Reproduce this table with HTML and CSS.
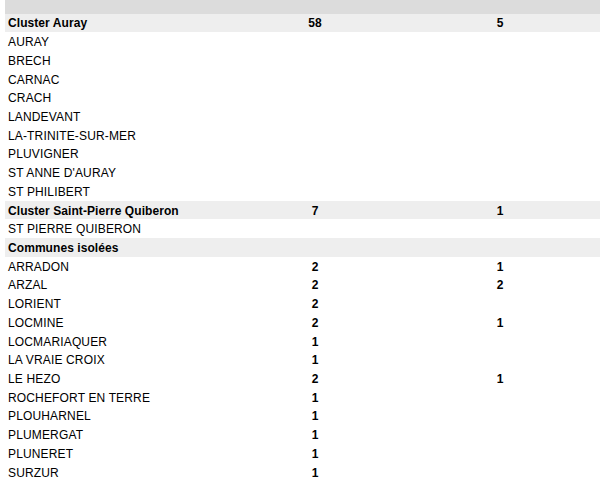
FILE: index.html
```html
<!DOCTYPE html>
<html lang="fr">
<head>
<meta charset="utf-8">
<title>Clusters</title>
<link rel="stylesheet" href="styles.css">
</head>
<body>
<table class="grid">
  <colgroup><col class="c1"><col class="c2"><col class="c3"></colgroup>
  <tr class="head"><td></td><td></td><td></td></tr>
  <tr class="group"><td>Cluster Auray</td><td class="num">58</td><td class="num">5</td></tr>
  <tr><td>AURAY</td><td class="num"></td><td class="num"></td></tr>
  <tr><td>BRECH</td><td class="num"></td><td class="num"></td></tr>
  <tr><td>CARNAC</td><td class="num"></td><td class="num"></td></tr>
  <tr><td>CRACH</td><td class="num"></td><td class="num"></td></tr>
  <tr><td>LANDEVANT</td><td class="num"></td><td class="num"></td></tr>
  <tr><td>LA-TRINITE-SUR-MER</td><td class="num"></td><td class="num"></td></tr>
  <tr><td>PLUVIGNER</td><td class="num"></td><td class="num"></td></tr>
  <tr><td>ST ANNE D'AURAY</td><td class="num"></td><td class="num"></td></tr>
  <tr><td>ST PHILIBERT</td><td class="num"></td><td class="num"></td></tr>
  <tr class="group"><td>Cluster Saint-Pierre Quiberon</td><td class="num">7</td><td class="num">1</td></tr>
  <tr><td>ST PIERRE QUIBERON</td><td class="num"></td><td class="num"></td></tr>
  <tr class="group"><td>Communes isolées</td><td class="num"></td><td class="num"></td></tr>
  <tr><td>ARRADON</td><td class="num">2</td><td class="num">1</td></tr>
  <tr><td>ARZAL</td><td class="num">2</td><td class="num">2</td></tr>
  <tr><td>LORIENT</td><td class="num">2</td><td class="num"></td></tr>
  <tr><td>LOCMINE</td><td class="num">2</td><td class="num">1</td></tr>
  <tr><td>LOCMARIAQUER</td><td class="num">1</td><td class="num"></td></tr>
  <tr><td>LA VRAIE CROIX</td><td class="num">1</td><td class="num"></td></tr>
  <tr><td>LE HEZO</td><td class="num">2</td><td class="num">1</td></tr>
  <tr><td>ROCHEFORT EN TERRE</td><td class="num">1</td><td class="num"></td></tr>
  <tr><td>PLOUHARNEL</td><td class="num">1</td><td class="num"></td></tr>
  <tr><td>PLUMERGAT</td><td class="num">1</td><td class="num"></td></tr>
  <tr><td>PLUNERET</td><td class="num">1</td><td class="num"></td></tr>
  <tr><td>SURZUR</td><td class="num">1</td><td class="num"></td></tr>
</table>
</body>
</html>
```
FILE: styles.css
```css
html, body {
  margin: 0;
  padding: 0;
  background: #ffffff;
}
body {
  padding-left: 5px;
  font-family: "Liberation Sans", Arial, sans-serif;
  font-size: 12px;
  color: #000000;
}
.grid {
  border-collapse: collapse;
  table-layout: fixed;
  width: 595px;
}
.c1 { width: 225px; }
.c2 { width: 170px; }
.c3 { width: 200px; }
.grid td {
  padding: 1px 0 0 3px;
  height: 17.72px;
  line-height: 14px;
  vertical-align: middle;
  white-space: nowrap;
  letter-spacing: 0.15px;
}
.grid .head td {
  height: 13.5px;
  padding: 0;
  background: #dcdcdc;
}
.grid .group td {
  background: #eeeeee;
  font-weight: bold;
  letter-spacing: 0.07px;
}
.grid td.num {
  text-align: center;
  padding-left: 0;
  font-weight: bold;
  letter-spacing: 0;
}
```
